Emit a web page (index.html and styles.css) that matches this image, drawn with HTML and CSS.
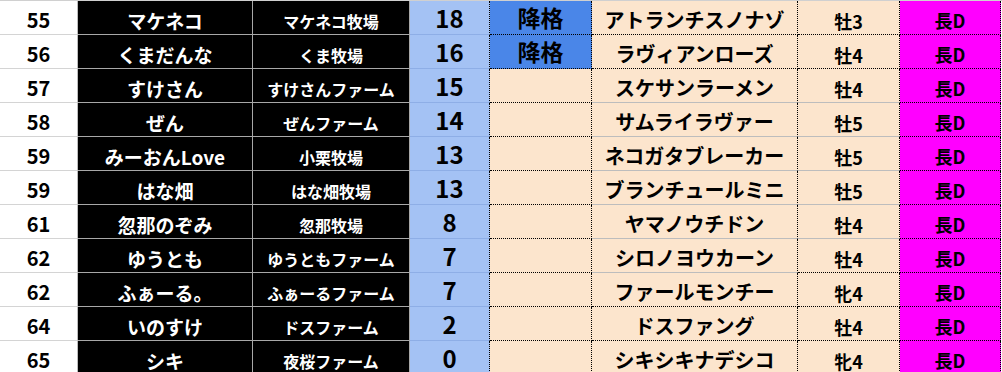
FILE: index.html
```html
<!DOCTYPE html>
<html lang="ja">
<head>
<meta charset="utf-8">
<title>順位表</title>
<link rel="stylesheet" href="styles.css">
</head>
<body>
<div class="sheet">
  <div class="row r-dot">
    <div class="c rank">55</div><div class="c name">マケネコ</div><div class="c farm">マケネコ牧場</div><div class="c pts">18</div><div class="c tag on">降格</div><div class="c horse">アトランチスノナゾ</div><div class="c sex">牡3</div><div class="c dist">長D</div><div class="c edge"></div>
  </div>
  <div class="row r-dot">
    <div class="c rank">56</div><div class="c name">くまだんな</div><div class="c farm">くま牧場</div><div class="c pts">16</div><div class="c tag on">降格</div><div class="c horse">ラヴィアンローズ</div><div class="c sex">牡4</div><div class="c dist">長D</div><div class="c edge"></div>
  </div>
  <div class="row r-grey">
    <div class="c rank">57</div><div class="c name">すけさん</div><div class="c farm">すけさんファーム</div><div class="c pts">15</div><div class="c tag"></div><div class="c horse">スケサンラーメン</div><div class="c sex">牡4</div><div class="c dist">長D</div><div class="c edge"></div>
  </div>
  <div class="row r-grey">
    <div class="c rank">58</div><div class="c name">ぜん</div><div class="c farm">ぜんファーム</div><div class="c pts">14</div><div class="c tag"></div><div class="c horse">サムライラヴァー</div><div class="c sex">牡5</div><div class="c dist">長D</div><div class="c edge"></div>
  </div>
  <div class="row r-grey">
    <div class="c rank">59</div><div class="c name">みーおんLove</div><div class="c farm">小栗牧場</div><div class="c pts">13</div><div class="c tag"></div><div class="c horse">ネコガタブレーカー</div><div class="c sex">牡5</div><div class="c dist">長D</div><div class="c edge"></div>
  </div>
  <div class="row r-grey">
    <div class="c rank">59</div><div class="c name">はな畑</div><div class="c farm">はな畑牧場</div><div class="c pts">13</div><div class="c tag"></div><div class="c horse">ブランチュールミニ</div><div class="c sex">牡5</div><div class="c dist">長D</div><div class="c edge"></div>
  </div>
  <div class="row r-grey">
    <div class="c rank">61</div><div class="c name">忽那のぞみ</div><div class="c farm">忽那牧場</div><div class="c pts">8</div><div class="c tag"></div><div class="c horse">ヤマノウチドン</div><div class="c sex">牡4</div><div class="c dist">長D</div><div class="c edge"></div>
  </div>
  <div class="row r-half">
    <div class="c rank">62</div><div class="c name">ゆうとも</div><div class="c farm">ゆうともファーム</div><div class="c pts">7</div><div class="c tag"></div><div class="c horse">シロノヨウカーン</div><div class="c sex">牡4</div><div class="c dist">長D</div><div class="c edge"></div>
  </div>
  <div class="row r-dot">
    <div class="c rank">62</div><div class="c name">ふぁーる。</div><div class="c farm">ふぁーるファーム</div><div class="c pts">7</div><div class="c tag"></div><div class="c horse">ファールモンチー</div><div class="c sex">牝4</div><div class="c dist">長D</div><div class="c edge"></div>
  </div>
  <div class="row r-dot">
    <div class="c rank">64</div><div class="c name">いのすけ</div><div class="c farm">ドスファーム</div><div class="c pts">2</div><div class="c tag"></div><div class="c horse">ドスファング</div><div class="c sex">牡4</div><div class="c dist">長D</div><div class="c edge"></div>
  </div>
  <div class="row r-dot">
    <div class="c rank">65</div><div class="c name">シキ</div><div class="c farm">夜桜ファーム</div><div class="c pts">0</div><div class="c tag"></div><div class="c horse">シキシキナデシコ</div><div class="c sex">牝4</div><div class="c dist">長D</div><div class="c edge"></div>
  </div>
</div>
</body>
</html>
```
FILE: styles.css
```css
html, body {
  margin: 0;
  padding: 0;
  background: #ffffff;
  overflow: hidden;
}

.sheet {
  width: 1002px;
  border-top: 1px solid #d0d0d0;
  font-family: "Noto Sans CJK JP", "Noto Sans", sans-serif;
  font-weight: 700;
  color: #000;
}

.row {
  display: grid;
  grid-template-columns: 78px 175px 157px 80px 102px 206px 102px 101px 1px;
  height: 34px;
}

.c {
  box-sizing: border-box;
  height: 34px;
  display: flex;
  align-items: center;
  justify-content: center;
  border-right: 1px solid #bdbdbd;
  border-bottom: 1px solid #d4d4d4;
  white-space: nowrap;
  line-height: 1;
}

.rank {
  background: #ffffff;
  font-size: 20px;
  padding-top: 5px;
}

.name {
  background: #000;
  color: #fff;
  font-size: 19px;
  padding-top: 6px;
  border-bottom-color: #a8a8a8;
  border-right-color: #a8a8a8;
}

.farm {
  background: #000;
  color: #fff;
  font-size: 16px;
  padding-top: 7px;
  border-bottom-color: #a8a8a8;
  border-right-color: #a8a8a8;
}

.pts {
  background: #a4c2f4;
  font-size: 24px;
  padding-top: 0;
  border-bottom-color: #8eaee6;
  border-right: 1px dotted #000;
}

.tag {
  background: #fce5cd;
  font-size: 23px;
  border-bottom: 1px dotted #000;
  border-right: 1px dotted #000;
}

.tag.on {
  background: #4a86e8;
}

.horse {
  background: #fce5cd;
  font-size: 20px;
  padding-top: 4px;
  border-right: 1px dotted #000;
}

.sex {
  background: #fce5cd;
  font-size: 18px;
  padding-top: 6px;
  border-right: 1px dotted #000;
}

.dist {
  background: #ff00ff;
  font-size: 18px;
  padding-top: 5px;
  border-right: 1px dotted #000;
  border-bottom: 1px dotted #000;
}

.edge {
  background: #fff;
  border: 0;
}

.r-dot .horse,
.r-dot .sex,
.r-half .sex {
  border-bottom: 1px dotted #000;
}

.r-grey .horse,
.r-grey .sex,
.r-half .horse {
  border-bottom: 1px solid #bdbdbd;
}
```
